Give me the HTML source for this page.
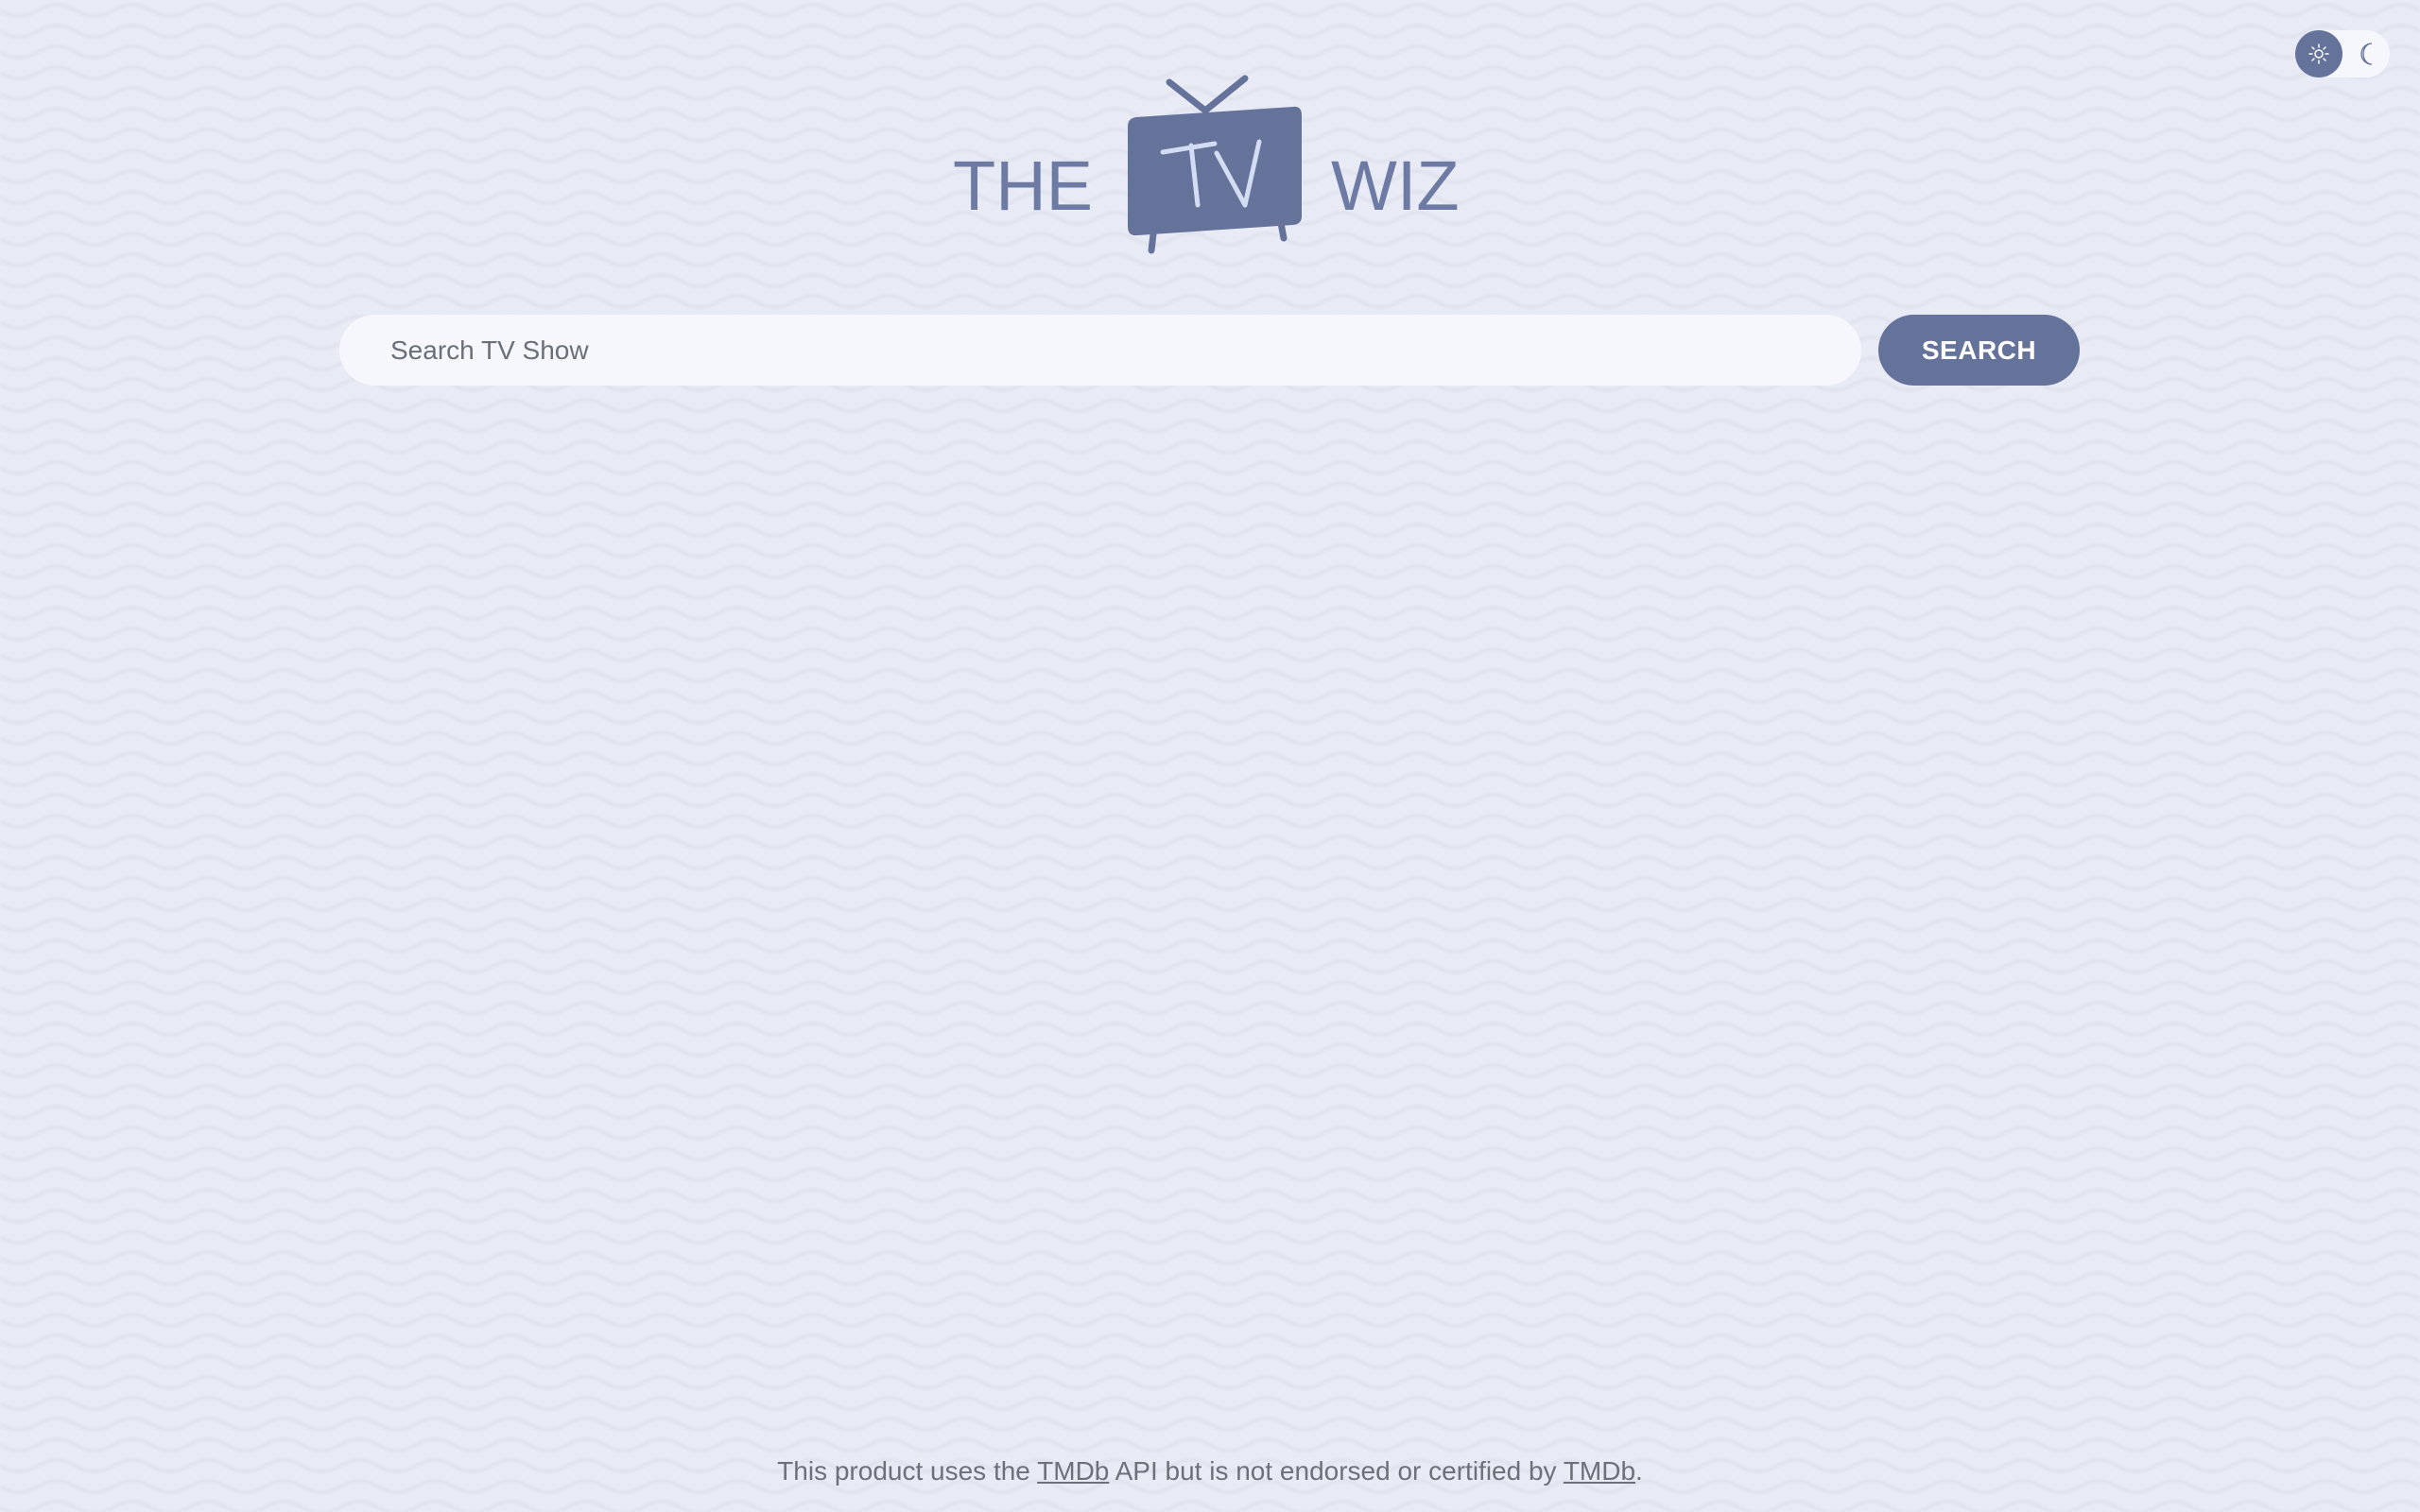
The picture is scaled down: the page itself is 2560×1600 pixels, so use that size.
<!DOCTYPE html>
<html><head><meta charset="utf-8"><style>
html,body{margin:0;padding:0}
body{width:2560px;height:1600px;overflow:hidden;position:relative;font-family:"Liberation Sans",sans-serif;background:#e8ebf5;}
.bg{position:absolute;inset:0}
.logo{position:absolute;top:0;left:0;width:2560px;height:300px}
.word{position:absolute;font-weight:normal;font-size:74px;color:#6d7ba4;top:160px;line-height:1}
.search{position:absolute;left:359px;top:333px;width:1610px;height:75px;border-radius:38px;background:#f6f7fc;box-sizing:border-box;padding-left:54px;font-size:28px;color:#6b6f78;line-height:75px}
.btn{position:absolute;left:1987px;top:333px;width:213px;height:75px;border-radius:38px;background:#65739a;color:#fff;font-size:28px;font-weight:bold;text-align:center;line-height:75px;letter-spacing:.5px}
.tog{position:absolute;left:2428px;top:32px;width:100px;height:50px;border-radius:25px;background:#f6f7fc}
.tog .k{position:absolute;left:0;top:0;width:50px;height:50px;border-radius:50%;background:#65739a}
.foot{position:absolute;left:0;width:2560px;text-align:center;top:1541px;font-size:28px;color:#6e7079}
.foot u{color:#6e7079}
</style></head><body>
<svg class="bg" width="2560" height="1600"><defs><filter id="b"><feGaussianBlur stdDeviation="1.2"/></filter><pattern id="w" width="80" height="44" patternUnits="userSpaceOnUse"><path d="M-40 11 Q-20 -1 0 11 T40 11 T80 11 T120 11" fill="none" stroke="#e0e3ee" stroke-width="4"/><path d="M-80 33 Q-60 21 -40 33 T0 33 T40 33 T80 33 T120 33" transform="translate(40 0)" fill="none" stroke="#e0e3ee" stroke-width="4"/></pattern></defs><rect width="2560" height="1600" fill="url(#w)" filter="url(#b)"/></svg>
<div class="word" style="left:1008px">THE</div>
<div class="word" style="left:1408px">WIZ</div>
<svg class="logo" width="2560" height="300">
<g stroke="#65739a" stroke-width="7" stroke-linecap="round" stroke-linejoin="round" fill="none">
<polyline points="1237,87 1275,117 1317,83"/>
<line x1="1220" y1="248" x2="1218" y2="265"/><line x1="1355" y1="236" x2="1358" y2="252"/>
</g>
<path d="M1202 124 L1368 113 Q1377 112 1377 122 L1377 229 Q1377 237 1368 238 L1203 249 Q1193 250 1193 240 L1193 134 Q1193 125 1202 124Z" fill="#65739a"/>
<g stroke="#d2dcf2" stroke-width="5" stroke-linecap="round" stroke-linejoin="round" fill="none">
<line x1="1230" y1="161" x2="1285" y2="152"/><line x1="1260" y1="154" x2="1267" y2="217"/>
<polyline points="1287,162 1317,217 1332,150"/>
</g>
</svg>
<div class="search">Search TV Show</div>
<div class="btn">SEARCH</div>
<div class="tog"><div class="k"></div>
<svg width="100" height="50" style="position:absolute;left:0;top:0"><g stroke="#fff" stroke-width="1.5" stroke-linecap="round"><circle cx="25" cy="25" r="4" fill="none"/><line x1="25" y1="15" x2="25" y2="18"/><line x1="25" y1="32" x2="25" y2="35"/><line x1="15" y1="25" x2="18" y2="25"/><line x1="32" y1="25" x2="35" y2="25"/><line x1="18" y1="18" x2="20" y2="20"/><line x1="30" y1="30" x2="32" y2="32"/><line x1="18" y1="32" x2="20" y2="30"/><line x1="30" y1="20" x2="32" y2="18"/></g>
<path d="M81 14 A11 11 0 1 0 81 36 A9 11 0 1 1 81 14Z" fill="none" stroke="#65739a" stroke-width="1.3"/></svg></div>
<div class="foot">This product uses the <u>TMDb</u> API but is not endorsed or certified by <u>TMDb</u>.</div>
</body></html>
